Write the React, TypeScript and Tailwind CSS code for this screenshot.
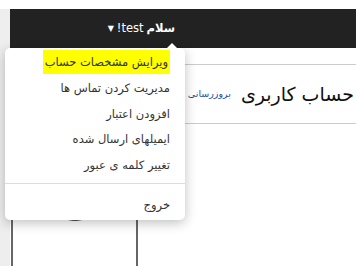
import React from "react";

const menuItems = [
  "مدیریت کردن تماس ها",
  "افزودن اعتبار",
  "ایمیلهای ارسال شده",
  "تغییر کلمه ی عبور",
];

const UserMenu: React.FC = () => {
  return (
    <div className="absolute left-[5px] top-[48px] w-[180px] rounded-[5px] bg-white shadow-[0_3px_12px_rgba(0,0,0,0.25)]">
      <div className="absolute -top-[5px] left-[162px] h-0 w-0 border-x-[5px] border-b-[5px] border-x-transparent border-b-white" />
      <ul className="text-[11.5px] text-[#333]">
        <li className="flex h-[28px] items-center pr-[15px]">
          <span className="bg-[#ffff00] px-[2px] py-[5px] leading-[14px]">ویرایش مشخصات حساب</span>
        </li>
        {menuItems.map((item) => (
          <li key={item} className="flex h-[25.5px] items-center pr-[15px]">
            {item}
          </li>
        ))}
      </ul>
      <div className="mt-[5px] border-t border-[#ddd]" />
      <div className="flex h-[36px] items-center pr-[15px] pt-[8px] text-[11.5px] text-[#333]">خروج</div>
    </div>
  );
};

export default function App() {
  return (
    <div
      dir="rtl"
      className="relative h-[266px] w-[356px] overflow-hidden bg-white font-['DejaVu_Sans',sans-serif]"
    >
      <div className="h-[9px] bg-white" />
      <div className="flex h-[257px]">
        <div className="flex min-w-0 flex-1 flex-col overflow-hidden">
          <div className="flex h-[39px] items-center bg-[#222] pr-[181px]">
            <span className="flex items-center gap-[3px] whitespace-nowrap text-[11.5px] text-white">
              <b>سلام</b> test!
              <span className="text-[8px]">▼</span>
            </span>
          </div>
          <div className="flex flex-1">
            <div className="flex min-w-0 flex-1 flex-col">
              <div className="mt-[16px] flex h-[60px] items-center gap-[10px] border-y border-[#ccc] pr-[2px]">
                <h1 className="whitespace-nowrap text-[19px] leading-none text-[#111]">حساب کاربری</h1>
                <a className="whitespace-nowrap text-[9.5px] text-[#1a4fa3]">بروزرسانی مشخصات</a>
              </div>
            </div>
            <div className="ml-[1px] mr-[12px] mt-[160px] w-[127px] shrink-0 border-x-2 border-[#666]">
              <div className="mx-auto -mt-[17px] h-[30px] w-[34px] rounded-full border border-[#555]" />
            </div>
          </div>
        </div>
        <div className="w-[10px] shrink-0 bg-[#eeeeee]" />
      </div>
      <UserMenu />
    </div>
  );
}
